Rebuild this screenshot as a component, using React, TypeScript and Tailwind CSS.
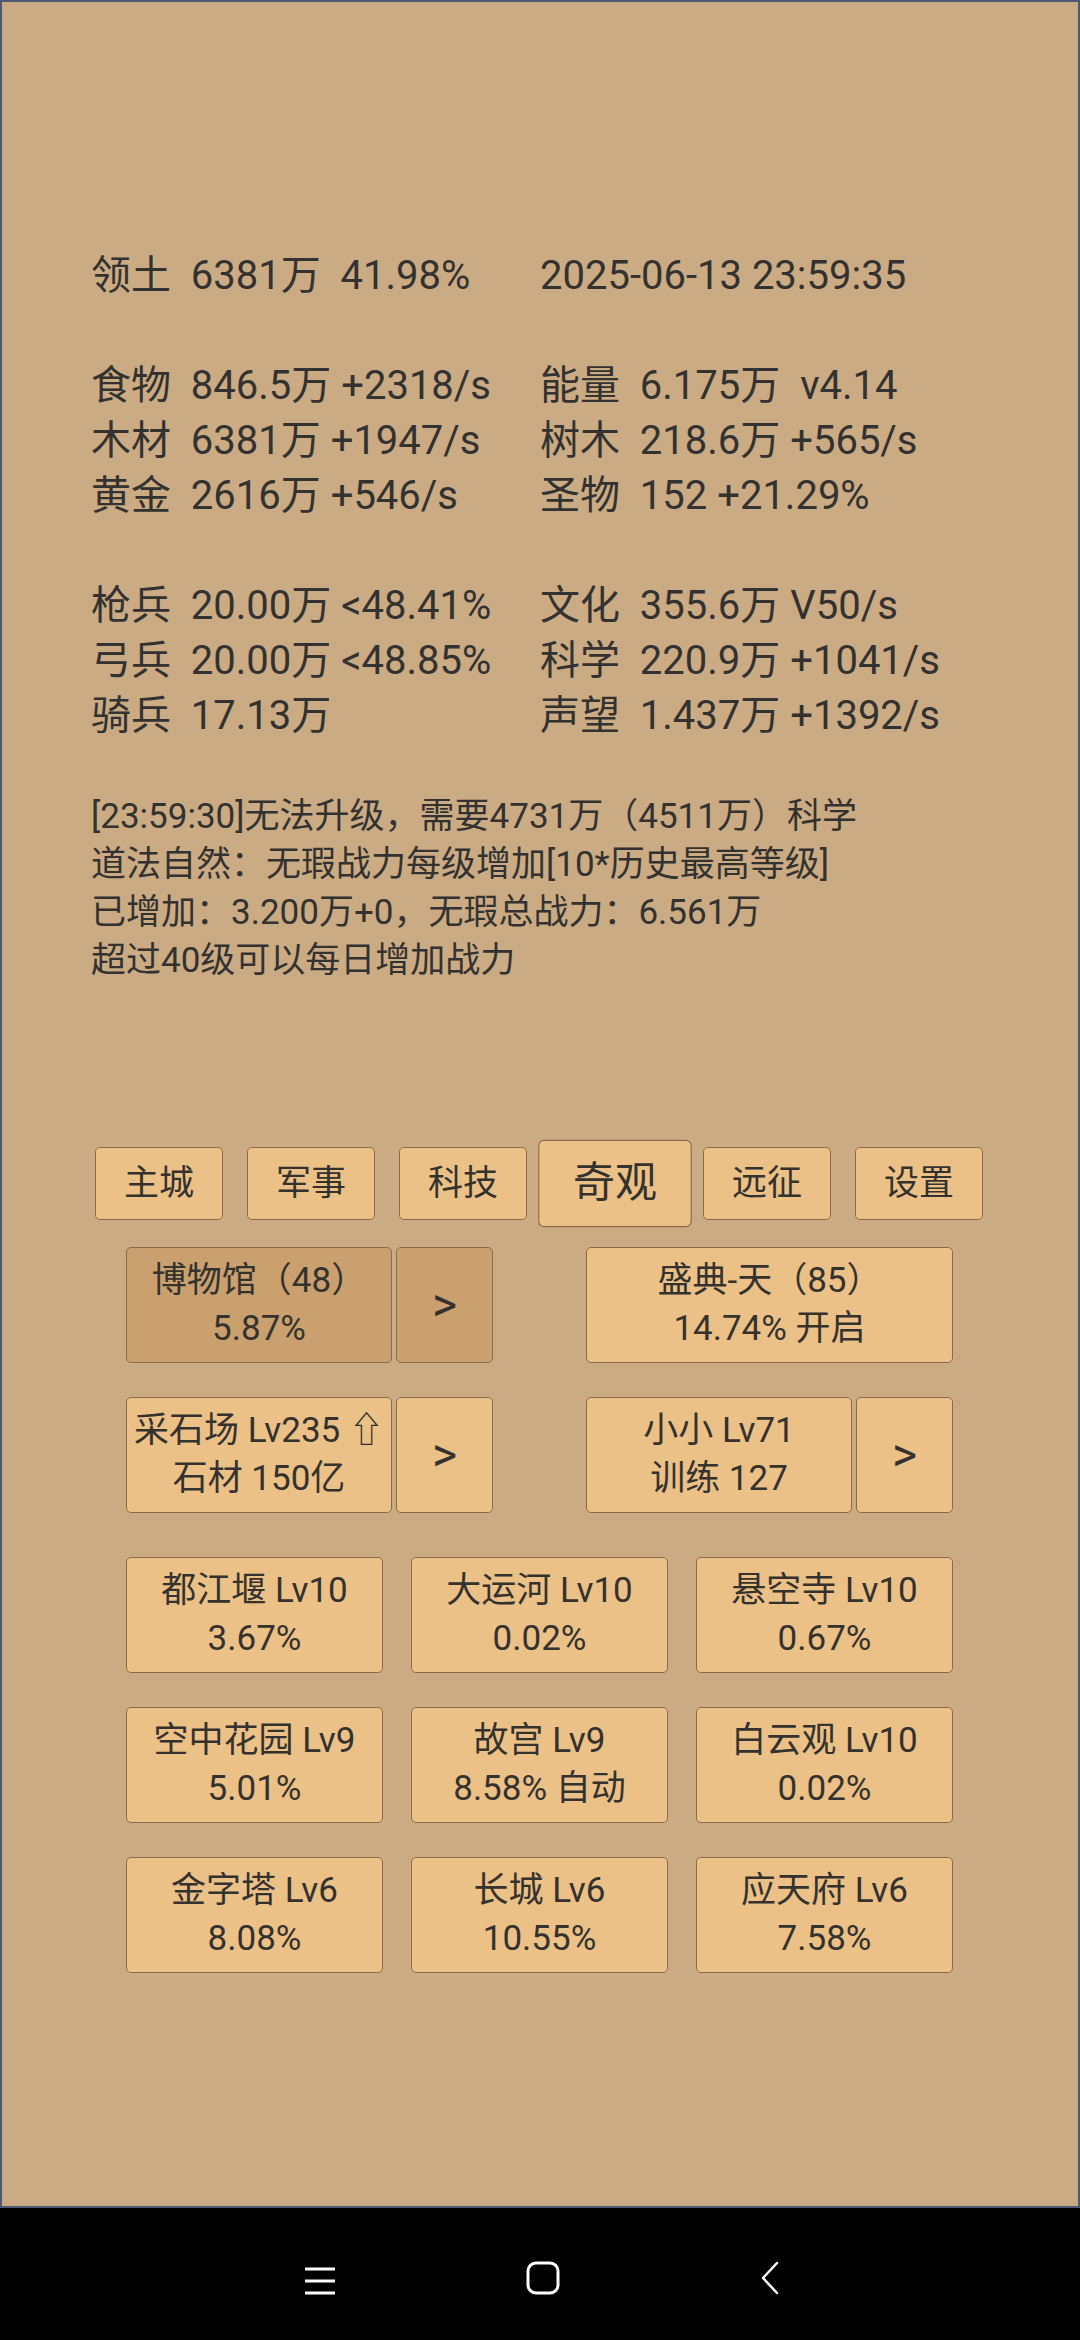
const FONT = "font-['Roboto','Noto_Sans_CJK_SC',sans-serif]";

const stats: [string, string][] = [
  ['领土  6381万  41.98%', '2025-06-13 23:59:35'],
  ['', ''],
  ['食物  846.5万 +2318/s', '能量  6.175万  v4.14'],
  ['木材  6381万 +1947/s', '树木  218.6万 +565/s'],
  ['黄金  2616万 +546/s', '圣物  152 +21.29%'],
  ['', ''],
  ['枪兵  20.00万 <48.41%', '文化  355.6万 V50/s'],
  ['弓兵  20.00万 <48.85%', '科学  220.9万 +1041/s'],
  ['骑兵  17.13万', '声望  1.437万 +1392/s'],
];

const logLines = [
  '[23:59:30]无法升级，需要4731万（4511万）科学',
  '道法自然：无瑕战力每级增加[10*历史最高等级]',
  '已增加：3.200万+0，无瑕总战力：6.561万',
  '超过40级可以每日增加战力',
];

const tabs = ['主城', '军事', '科技', '奇观', '远征', '设置'];

const wonders: [string, string][] = [
  ['都江堰 Lv10', '3.67%'],
  ['大运河 Lv10', '0.02%'],
  ['悬空寺 Lv10', '0.67%'],
  ['空中花园 Lv9', '5.01%'],
  ['故宫 Lv9', '8.58% 自动'],
  ['白云观 Lv10', '0.02%'],
  ['金字塔 Lv6', '8.08%'],
  ['长城 Lv6', '10.55%'],
  ['应天府 Lv6', '7.58%'],
];

const btn =
  'border-[1.5px] border-[#8c6c48] rounded-[5px] flex flex-col items-center justify-center text-[#35322e] text-[35px] leading-[48px] whitespace-pre';

function Panel({ top, bottom, dark, wide }: { top: string; bottom: string; dark?: boolean; wide?: boolean }) {
  return (
    <div className={`${btn} h-[116px] ${wide ? 'w-[367px]' : 'w-[266px]'} ${dark ? 'bg-[#c9a06e]' : 'bg-[#ebc187]'}`}>
      <span>{top}</span>
      <span>{bottom}</span>
    </div>
  );
}

function Arrow({ dark }: { dark?: boolean }) {
  return (
    <div className={`${btn} h-[116px] w-[97px] text-[48px] ${dark ? 'bg-[#c9a06e]' : 'bg-[#ebc187]'}`}>
      &gt;
    </div>
  );
}

export default function App() {
  return (
    <div className={`w-[1080px] h-[2340px] flex flex-col ${FONT}`}>
      <div className="h-[2208px] border-2 border-[#4e5a72] bg-[#cbab83] flex flex-col">
        {/* stats */}
        <div className="pt-[246px] pl-[89px] grid grid-cols-[449px_1fr] text-[40px] leading-[55px] text-[#333230]">
          {stats.map(([l, r], i) => (
            <div key={i} className="contents">
              <div className="h-[55px] whitespace-pre">{l}</div>
              <div className="h-[55px] whitespace-pre">{r}</div>
            </div>
          ))}
        </div>

        {/* log */}
        <div className="mt-[50px] pl-[89px] text-[35px] leading-[48px] text-[#333230]">
          {logLines.map((t, i) => (
            <div key={i} className="h-[48px] whitespace-pre">{t}</div>
          ))}
        </div>

        {/* tabs */}
        <div className="mt-[162px] flex justify-center gap-[24px] pr-[2px]">
          {tabs.map(t => (
            <div
              key={t}
              className={`${btn} w-[128px] h-[73px] bg-[#ebc187] text-[30px] ${t === '奇观' ? 'scale-[1.2]' : ''}`}
            >
              {t}
            </div>
          ))}
        </div>

        {/* panels */}
        <div className="mt-[27px] ml-[124px] w-[827px] flex flex-col gap-[34px]">
          <div className="flex justify-between">
            <div className="flex gap-[4px]">
              <Panel top="博物馆（48）" bottom="5.87%" dark />
              <Arrow dark />
            </div>
            <Panel top="盛典-天（85）" bottom="14.74% 开启" wide />
          </div>
          <div className="flex justify-between">
            <div className="flex gap-[4px]">
              <Panel top="采石场 Lv235 ⇧" bottom="石材 150亿" />
              <Arrow />
            </div>
            <div className="flex gap-[4px]">
              <Panel top="小小 Lv71" bottom="训练 127" />
              <Arrow />
            </div>
          </div>
        </div>

        <div className="mt-[44px] ml-[124px] w-[827px] grid grid-cols-3 gap-x-[28px] gap-y-[34px]">
          {wonders.map(([a, b]) => (
            <div key={a} className={`${btn} h-[116px] bg-[#ebc187]`}>
              <span>{a}</span>
              <span>{b}</span>
            </div>
          ))}
        </div>
      </div>

      {/* system nav bar */}
      <div className="h-[132px] bg-black relative">
        <svg className="absolute left-[303px] top-[56px]" width="34" height="34" viewBox="0 0 34 34" fill="none" stroke="white" strokeWidth="3">
          <path d="M2 5h30M2 17h30M2 29h30" />
        </svg>
        <svg className="absolute left-[525px] top-[52px]" width="36" height="36" viewBox="0 0 36 36" fill="none" stroke="white" strokeWidth="3">
          <rect x="3" y="3" width="30" height="30" rx="8" />
        </svg>
        <svg className="absolute left-[758px] top-[52px]" width="24" height="36" viewBox="0 0 24 36" fill="none" stroke="white" strokeWidth="2.5" strokeLinecap="round" strokeLinejoin="round">
          <path d="M19 3L5 18l14 15" />
        </svg>
      </div>
    </div>
  );
}
